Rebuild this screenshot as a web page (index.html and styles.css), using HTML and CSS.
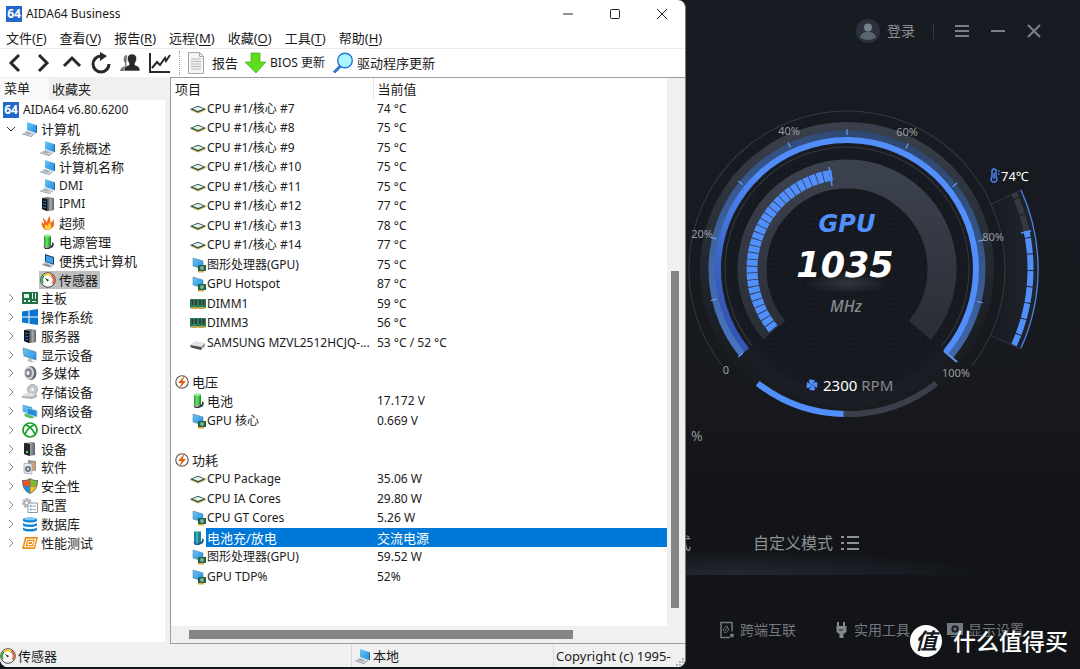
FILE: index.html
```html
<!DOCTYPE html>
<html lang="zh-CN">
<head>
<meta charset="utf-8">
<title>AIDA64 Business</title>
<link rel="stylesheet" href="styles.css">
</head>
<body>
<svg class="defs" aria-hidden="true">
  <defs>
    <linearGradient id="screen" x1="0" y1="0" x2="1" y2="1"><stop offset="0" stop-color="#6cc6f8"/><stop offset="1" stop-color="#1e8fe0"/></linearGradient>
    <linearGradient id="metal" x1="0" y1="0" x2="1" y2="0"><stop offset="0" stop-color="#3a3d42"/><stop offset=".5" stop-color="#a5a9ae"/><stop offset="1" stop-color="#5d6167"/></linearGradient>
    <linearGradient id="cell" x1="0" y1="0" x2="1" y2="0"><stop offset="0" stop-color="#1f9a2c"/><stop offset=".4" stop-color="#6fe46b"/><stop offset="1" stop-color="#118322"/></linearGradient>
    <symbol id="i-64" viewBox="0 0 16 16"><rect width="16" height="16" fill="#2268c8"/><text x="8" y="12" text-anchor="middle" class="logo-text">64</text></symbol>
    <symbol id="i-pc" viewBox="0 0 16 16"><path d="M5 1l9 3v8L5 9z" fill="url(#screen)"/><path d="M14 4l1 .5V12l-1 .3z" fill="#35608a"/><path d="M0 12.500l5-3 8 2.500-4 3z" fill="#d3d9de"/><path d="M2 12.500l3-2 5 1.700-2.500 1.500z" fill="#a9b1b8"/><path d="M0 12.500l9 2.500 4-3v.8L9 16l-9-2.700z" fill="#8b949d"/></symbol>
    <symbol id="i-laptop" viewBox="0 0 16 16"><path d="M5 1l9 3v8L5 9z" fill="#173f68"/><path d="M6 2.500l7 2.200v6L6 8.500z" fill="#3ba5ef"/><path d="M1 12l4-3 9 3-3 3z" fill="#c9ced3"/><path d="M3 12l2-1.500 6 2-1.500 1.500z" fill="#858c94"/></symbol>
    <symbol id="i-server" viewBox="0 0 16 16"><path d="M2 2l5-1 7 1v12l-7 1-5-2z" fill="#777c83"/><path d="M2 2l5 1v12l-5-2z" fill="#10151e"/><path d="M7 3l7-1v12l-7 1z" fill="url(#metal)"/><path d="M3 5l3 .6M3 8l3 .6M3 11l3 .6" stroke="#2380de"/></symbol>
    <symbol id="i-flame" viewBox="0 0 16 16"><path d="M4 14C2 12 1 9 2 7l2 2c0-3-1-4-1-6 2 1 3 3 4 5 0-3 1-5 3-7 0 3 0 5 1 7l3-4c-1 3 2 6-2 9-2 2-6 3-8 1z" fill="#f36c1d"/><path d="M5 14c-1-2 0-4 1-5l1 2 3-4c0 3 2 3 1 6-2 2-4 2-6 1z" fill="#ffd044"/></symbol>
    <symbol id="i-batt" viewBox="0 0 16 16"><path d="M4 1.500h7v12H4z" fill="url(#cell)"/><ellipse cx="7.500" cy="1.800" rx="3.500" ry="1.300" fill="#8ceb86"/><path d="M3 12c2 2 6 2 9-1V8l2 2-1 3-4 2H5z" fill="#33373b"/><path d="M4 12h6l-2 2H5z" fill="#9ba0a4"/></symbol>
    <symbol id="i-battsel" viewBox="0 0 16 16"><path d="M4 1.500h7v12H4z" fill="#17829a"/><path d="M6 2h2v11H6z" fill="#38b3b6"/><path d="M3 12c2 2 6 2 9-1V8l2 2-1 3-4 2H5z" fill="#1e568b"/></symbol>
    <symbol id="i-gauge" viewBox="0 0 16 16"><circle cx="8" cy="8" r="7.300" fill="#fff" stroke="#3b3e40"/><path d="M3 11A5.500 5.500 0 0 1 4 4" fill="none" stroke="#37ad43" stroke-width="2"/><path d="M4 4A5.500 5.500 0 0 1 11 3.300" fill="none" stroke="#f3ca32" stroke-width="2"/><path d="M11 3.300A5.500 5.500 0 0 1 12.500 11.500" fill="none" stroke="#ec6330" stroke-width="2"/><path d="M5 6l4 2-1.500 1.500z" fill="#252525"/></symbol>
    <symbol id="i-board" viewBox="0 0 16 16"><path d="M0 2h16v12H0z" fill="#1d7344"/><path d="M2 4h5v4H2zM2 10h2v2H2zM6 10h2v2H6zM10 3h1v6h-1zM13 3h1v6h-1zM10 11h4v1h-4z" fill="#e7f4ec"/></symbol>
    <symbol id="i-win" viewBox="0 0 16 16"><path d="M0 2.500l6.500-1v6H0zM7.500 1.300L16 0v7.500H7.500zM0 8.500h6.500v6L0 13.600zM7.500 8.500H16V16l-8.500-1.300z" fill="#0a76d0"/></symbol>
    <symbol id="i-monitor" viewBox="0 0 16 16"><path d="M1 1l13 4v8L2 9z" fill="url(#screen)" stroke="#607d97" stroke-width=".7"/><path d="M7 11l3 1v2l3 1-4 .5-4-2z" fill="#bac2c9"/></symbol>
    <symbol id="i-speaker" viewBox="0 0 16 16"><ellipse cx="9" cy="8" rx="5.500" ry="7" fill="#63696f"/><ellipse cx="7" cy="8" rx="5" ry="6.500" fill="#d0d4d8"/><ellipse cx="6.500" cy="8" rx="3.300" ry="4.500" fill="#777d83"/><ellipse cx="6" cy="8" rx="1.500" ry="2.200" fill="#f2f2f2"/></symbol>
    <symbol id="i-disk" viewBox="0 0 16 16"><circle cx="10.500" cy="5.500" r="5" fill="#c5cace" stroke="#8d9398" stroke-width=".7"/><circle cx="10.500" cy="5.500" r="1.500" fill="#fff"/><path d="M0 12l5-3 10 1v3l-5 2-10-1z" fill="#aeb4b9"/><path d="M0 12l5-3 10 1-5 2.500z" fill="#e2e5e7"/></symbol>
    <symbol id="i-net" viewBox="0 0 16 16"><path d="M1 2l9 2.500V11L1 8.500z" fill="url(#screen)" stroke="#4f86b0" stroke-width=".5"/><path d="M5 5l10 2.500V14L5 11z" fill="#268bdb" stroke="#9fd6f9" stroke-width=".7"/><path d="M2 10.500l3 .5 5 2 3 1.500-4 1-6-2z" fill="#54bf5c"/></symbol>
    <symbol id="i-dx" viewBox="0 0 16 16"><circle cx="8" cy="8" r="7" fill="#fff" stroke="#15a026" stroke-width="1.700"/><path d="M4 3c3 1 7 5 9 9M12 3c-3 1-7 5-9 9" fill="none" stroke="#15a026" stroke-width="1.700"/></symbol>
    <symbol id="i-device" viewBox="0 0 16 16"><path d="M2 2l8-1 3 1v12l-6 1-5-2z" fill="url(#metal)"/><path d="M2 2l6 1v12l-6-2z" fill="#222529"/><circle cx="5" cy="11" r="1.200" fill="#55d95c"/></symbol>
    <symbol id="i-soft" viewBox="0 0 16 16"><path d="M6 1l8 1v10l-8-1z" fill="#8e959b"/><path d="M9 3l4 .6v8L9 11z" fill="#d9a06a"/><path d="M2 4l8 1v10l-8-1z" fill="#e7e9eb" stroke="#90979d" stroke-width=".6"/><circle cx="6" cy="10" r="3" fill="#707981"/><circle cx="6" cy="10" r="1" fill="#fff"/></symbol>
    <symbol id="i-shield" viewBox="0 0 16 16"><path d="M8 0c3 2 5 2 8 2 0 7-2 11-8 14C2 13 0 9 0 2c3 0 5 0 8-2z" fill="#656c70"/><path d="M7.700 1v7H1.500L1 3c3 0 5-1 6.700-2z" fill="#e9552b"/><path d="M8.300 1v7h6.200L15 3c-3 0-5-1-6.700-2z" fill="#7cbb2c"/><path d="M1.700 8.500h6V15c-3-1.500-5-3.500-6-6.500z" fill="#1793dc"/><path d="M14.300 8.500h-6V15c3-1.500 5-3.500 6-6.500z" fill="#fbbc25"/></symbol>
    <symbol id="i-config" viewBox="0 0 16 16"><circle cx="5" cy="6" r="3.500" fill="none" stroke="#adb4ba" stroke-width="3" stroke-dasharray="2 1"/><circle cx="5" cy="6" r="2.500" fill="none" stroke="#aeb5bb" stroke-width="2"/><path d="M6 6h9.500v9.500H6z" fill="#fff" stroke="#8e979f"/><path d="M8 9h1.500M8 12.500h1.500" stroke="#2678cf" stroke-width="1.500"/><path d="M10.500 9H14M10.500 12.500H14" stroke="#a1a7ad"/></symbol>
    <symbol id="i-db" viewBox="0 0 16 16"><path d="M1 3c3-2 11-2 14 0v2c-3 2-11 2-14 0zM1 7c3 2 11 2 14 0v2.500c-3 2-11 2-14 0zM1 11.500c3 2 11 2 14 0V14c-3 2-11 2-14 0z" fill="#1685d9"/><ellipse cx="8" cy="3" rx="6" ry="1.300" fill="#7ac7f7"/></symbol>
    <symbol id="i-bench" viewBox="0 0 16 16"><path d="M3 2h13l-3 12H0z" fill="#f38b19"/><path d="M4.700 4.300h8.800l-1.900 7.500H2.800z" fill="none" stroke="#fff" stroke-width="1.100"/><path d="M6.500 6.500h4.500l-.8 3H5.700z" fill="none" stroke="#fff"/></symbol>
    <symbol id="i-cpu" viewBox="0 0 16 16"><path d="M0 9l8 3.500L16 9l-1-1-7 3-7-3z" fill="#d5aa54"/><path d="M0 8l8-3.300L16 8l-8 3.500z" fill="#245b43"/><path d="M2.500 7.700l5.500-2 5.500 2-5.500 2.200z" fill="#e8ecea"/></symbol>
    <symbol id="i-gpu" viewBox="0 0 16 16"><path d="M3 1l10 3v8L3 9z" fill="url(#screen)" stroke="#496e8c" stroke-width=".5"/><path d="M8 8h8v6H8z" fill="#1d6544"/><circle cx="12" cy="11" r="2" fill="#7fae97"/><path d="M8 14h6v1.500H8z" fill="#e3ad3c"/></symbol>
    <symbol id="i-ram" viewBox="0 0 16 16"><path d="M0 3h16v9H0z" fill="#26805b"/><path d="M1.500 4h2v5h-2zM5 4h2v5H5zM9 4h2v5H9zM12.500 4h2v5h-2z" fill="#38393a"/><path d="M1 11h6v2H1zM8 11h7v2H8z" fill="#c9a44b"/></symbol>
    <symbol id="i-ssd" viewBox="0 0 16 16"><path d="M0 10l5-4 10 2-4 4z" fill="#e2e3e4"/><path d="M0 10l11 2v3L1 12.500z" fill="#484b4e"/><path d="M11 12l4-4v3l-4 4z" fill="#8f9396"/></symbol>
    <symbol id="i-volt" viewBox="0 0 16 16"><circle cx="7" cy="8" r="6.200" fill="#fff" stroke="#55514e" stroke-width="1.100"/><path d="M10 1L3 9h3.500L4 15l7-8H7.500z" fill="#e0600f"/></symbol>
  </defs>
</svg>

<div class="desktop">
  <section class="window">
    <header class="titlebar">
      <svg class="ico"><use href="#i-64"/></svg>
      <h1>AIDA64 Business</h1>
      <div class="win-controls">
        <button aria-label="最小化"><svg viewBox="0 0 12 12"><path d="M1 6h10"/></svg></button>
        <button aria-label="最大化"><svg viewBox="0 0 12 12"><rect x="1.500" y="1.500" width="9" height="9" rx="1"/></svg></button>
        <button aria-label="关闭"><svg viewBox="0 0 12 12"><path d="M1 1l10 10M11 1L1 11"/></svg></button>
      </div>
    </header>
    <nav class="menubar">
      <button>文件(<u>F</u>)</button><button>查看(<u>V</u>)</button><button>报告(<u>R</u>)</button><button>远程(<u>M</u>)</button><button>收藏(<u>O</u>)</button><button>工具(<u>T</u>)</button><button>帮助(<u>H</u>)</button>
    </nav>
    <div class="toolbar">
      <button aria-label="后退"><svg viewBox="0 0 22 22"><path d="M15 3l-8 8 8 8" class="line"/></svg></button>
      <button aria-label="前进"><svg viewBox="0 0 22 22"><path d="M6 3l8 8-8 8" class="line"/></svg></button>
      <button aria-label="向上"><svg viewBox="0 0 22 22"><path d="M2 14l8-8 8 8" class="line"/></svg></button>
      <button aria-label="刷新"><svg viewBox="0 0 22 22"><path d="M10 4a8 8 0 1 0 8 8" class="line"/><path d="M9 0l7 4-7 5z" class="solid"/></svg></button>
      <button aria-label="用户"><svg viewBox="0 0 22 22"><path d="M7 3c-4 0-4 6-2 8v3c-2 1-4 1-5 5h6z" fill="#777"/><path d="M12 2c-6 0-5 7-3 9v2c-3 1-5 2-5 6h16c0-4-2-5-5-6v-2c2-2 3-9-3-9z" class="solid" stroke="#fff" stroke-width=".6"/></svg></button>
      <button aria-label="图表"><svg viewBox="0 0 22 22"><path d="M1 1v19h20" class="axis"/><path d="M3 16l5-6 3 3 5-7 1 3 4-6" class="axis"/></svg></button>
      <span class="sep"></span>
      <button class="labelled"><svg viewBox="0 0 22 22"><path d="M1.500.5h11l4 4v17h-15z" fill="#f5f5f5" stroke="#a5a5a5"/><path d="M12.500.5v4h4" fill="none" stroke="#a5a5a5"/><path d="M4 7h10M4 9.500h10M4 12h10M4 14.500h10M4 17h10" stroke="#b5b5b5"/></svg>报告</button>
      <button class="labelled latin"><svg viewBox="0 0 22 22"><path d="M6 1h9v9h6L11 21 0 10h6z" fill="#5fdc1d" stroke="#42ad16" stroke-width=".7"/></svg>BIOS 更新</button>
      <button class="labelled"><svg viewBox="0 0 22 22"><path d="M8.500 14L2 20.500" stroke="#3278cf" stroke-width="3"/><circle cx="13" cy="8.500" r="7.300" fill="#adf5ff" stroke="#2277d2" stroke-width="1.400"/></svg>驱动程序更新</button>
    </div>

    <div class="content">
      <aside class="sidebar">
        <div class="tabs"><button class="active">菜单</button><button>收藏夹</button></div>
        <ul class="tree">
          <li class="l0 latin"><svg class="ico"><use href="#i-64"/></svg><span>AIDA64 v6.80.6200</span></li>
          <li class="l1"><svg class="arrow open" viewBox="0 0 8 8"><path d="M2 0l4 4-4 4"/></svg><svg class="ico"><use href="#i-pc"/></svg><span>计算机</span></li>
          <li class="l2"><svg class="ico"><use href="#i-pc"/></svg><span>系统概述</span></li>
          <li class="l2"><svg class="ico"><use href="#i-pc"/></svg><span>计算机名称</span></li>
          <li class="l2 latin"><svg class="ico"><use href="#i-pc"/></svg><span>DMI</span></li>
          <li class="l2 latin"><svg class="ico"><use href="#i-server"/></svg><span>IPMI</span></li>
          <li class="l2"><svg class="ico"><use href="#i-flame"/></svg><span>超频</span></li>
          <li class="l2"><svg class="ico"><use href="#i-batt"/></svg><span>电源管理</span></li>
          <li class="l2"><svg class="ico"><use href="#i-laptop"/></svg><span>便携式计算机</span></li>
          <li class="l2"><div class="current"><svg class="ico"><use href="#i-gauge"/></svg><span>传感器</span></div></li>
          <li class="l1"><svg class="arrow" viewBox="0 0 8 8"><path d="M2 0l4 4-4 4"/></svg><svg class="ico"><use href="#i-board"/></svg><span>主板</span></li>
          <li class="l1"><svg class="arrow" viewBox="0 0 8 8"><path d="M2 0l4 4-4 4"/></svg><svg class="ico"><use href="#i-win"/></svg><span>操作系统</span></li>
          <li class="l1"><svg class="arrow" viewBox="0 0 8 8"><path d="M2 0l4 4-4 4"/></svg><svg class="ico"><use href="#i-server"/></svg><span>服务器</span></li>
          <li class="l1"><svg class="arrow" viewBox="0 0 8 8"><path d="M2 0l4 4-4 4"/></svg><svg class="ico"><use href="#i-monitor"/></svg><span>显示设备</span></li>
          <li class="l1"><svg class="arrow" viewBox="0 0 8 8"><path d="M2 0l4 4-4 4"/></svg><svg class="ico"><use href="#i-speaker"/></svg><span>多媒体</span></li>
          <li class="l1"><svg class="arrow" viewBox="0 0 8 8"><path d="M2 0l4 4-4 4"/></svg><svg class="ico"><use href="#i-disk"/></svg><span>存储设备</span></li>
          <li class="l1"><svg class="arrow" viewBox="0 0 8 8"><path d="M2 0l4 4-4 4"/></svg><svg class="ico"><use href="#i-net"/></svg><span>网络设备</span></li>
          <li class="l1 latin"><svg class="arrow" viewBox="0 0 8 8"><path d="M2 0l4 4-4 4"/></svg><svg class="ico"><use href="#i-dx"/></svg><span>DirectX</span></li>
          <li class="l1"><svg class="arrow" viewBox="0 0 8 8"><path d="M2 0l4 4-4 4"/></svg><svg class="ico"><use href="#i-device"/></svg><span>设备</span></li>
          <li class="l1"><svg class="arrow" viewBox="0 0 8 8"><path d="M2 0l4 4-4 4"/></svg><svg class="ico"><use href="#i-soft"/></svg><span>软件</span></li>
          <li class="l1"><svg class="arrow" viewBox="0 0 8 8"><path d="M2 0l4 4-4 4"/></svg><svg class="ico"><use href="#i-shield"/></svg><span>安全性</span></li>
          <li class="l1"><svg class="arrow" viewBox="0 0 8 8"><path d="M2 0l4 4-4 4"/></svg><svg class="ico"><use href="#i-config"/></svg><span>配置</span></li>
          <li class="l1"><svg class="arrow" viewBox="0 0 8 8"><path d="M2 0l4 4-4 4"/></svg><svg class="ico"><use href="#i-db"/></svg><span>数据库</span></li>
          <li class="l1"><svg class="arrow" viewBox="0 0 8 8"><path d="M2 0l4 4-4 4"/></svg><svg class="ico"><use href="#i-bench"/></svg><span>性能测试</span></li>
        </ul>
      </aside>

      <main class="pane">
        <div class="list">
          <table>
            <colgroup><col class="c-item"><col></colgroup>
            <thead><tr><th>项目</th><th>当前值</th></tr></thead>
            <tbody>
              <tr><td><div class="cell"><svg class="ico"><use href="#i-cpu"/></svg><span>CPU #1/核心 #7</span></div></td><td>74 °C</td></tr>
              <tr><td><div class="cell"><svg class="ico"><use href="#i-cpu"/></svg><span>CPU #1/核心 #8</span></div></td><td>75 °C</td></tr>
              <tr><td><div class="cell"><svg class="ico"><use href="#i-cpu"/></svg><span>CPU #1/核心 #9</span></div></td><td>75 °C</td></tr>
              <tr><td><div class="cell"><svg class="ico"><use href="#i-cpu"/></svg><span>CPU #1/核心 #10</span></div></td><td>75 °C</td></tr>
              <tr><td><div class="cell"><svg class="ico"><use href="#i-cpu"/></svg><span>CPU #1/核心 #11</span></div></td><td>75 °C</td></tr>
              <tr><td><div class="cell"><svg class="ico"><use href="#i-cpu"/></svg><span>CPU #1/核心 #12</span></div></td><td>77 °C</td></tr>
              <tr><td><div class="cell"><svg class="ico"><use href="#i-cpu"/></svg><span>CPU #1/核心 #13</span></div></td><td>78 °C</td></tr>
              <tr><td><div class="cell"><svg class="ico"><use href="#i-cpu"/></svg><span>CPU #1/核心 #14</span></div></td><td>77 °C</td></tr>
              <tr><td><div class="cell"><svg class="ico"><use href="#i-gpu"/></svg><span>图形处理器(GPU)</span></div></td><td>75 °C</td></tr>
              <tr><td><div class="cell"><svg class="ico"><use href="#i-gpu"/></svg><span>GPU Hotspot</span></div></td><td>87 °C</td></tr>
              <tr><td><div class="cell"><svg class="ico"><use href="#i-ram"/></svg><span>DIMM1</span></div></td><td>59 °C</td></tr>
              <tr><td><div class="cell"><svg class="ico"><use href="#i-ram"/></svg><span>DIMM3</span></div></td><td>56 °C</td></tr>
              <tr><td><div class="cell"><svg class="ico"><use href="#i-ssd"/></svg><span>SAMSUNG MZVL2512HCJQ-...</span></div></td><td>53 °C / 52 °C</td></tr>
              <tr><td></td><td></td></tr>
              <tr class="cjk"><td><div class="cell group"><svg class="ico"><use href="#i-volt"/></svg><span>电压</span></div></td><td></td></tr>
              <tr><td class="cjk"><div class="cell"><svg class="ico"><use href="#i-batt"/></svg><span>电池</span></div></td><td>17.172 V</td></tr>
              <tr><td><div class="cell"><svg class="ico"><use href="#i-gpu"/></svg><span>GPU 核心</span></div></td><td>0.669 V</td></tr>
              <tr><td></td><td></td></tr>
              <tr class="cjk"><td><div class="cell group"><svg class="ico"><use href="#i-volt"/></svg><span>功耗</span></div></td><td></td></tr>
              <tr><td><div class="cell"><svg class="ico"><use href="#i-cpu"/></svg><span>CPU Package</span></div></td><td>35.06 W</td></tr>
              <tr><td><div class="cell"><svg class="ico"><use href="#i-cpu"/></svg><span>CPU IA Cores</span></div></td><td>29.80 W</td></tr>
              <tr><td><div class="cell"><svg class="ico"><use href="#i-gpu"/></svg><span>CPU GT Cores</span></div></td><td>5.26 W</td></tr>
              <tr class="selected cjk"><td><div class="cell"><svg class="ico"><use href="#i-battsel"/></svg><span>电池充/放电</span></div></td><td>交流电源</td></tr>
              <tr><td><div class="cell"><svg class="ico"><use href="#i-gpu"/></svg><span>图形处理器(GPU)</span></div></td><td>59.52 W</td></tr>
              <tr><td><div class="cell"><svg class="ico"><use href="#i-gpu"/></svg><span>GPU TDP%</span></div></td><td>52%</td></tr>
            </tbody>
          </table>
        </div>
        <div class="vbar"><div class="thumb"></div></div>
        <div class="hbar"><div class="thumb"></div></div>
      </main>
    </div>

    <footer class="statusbar">
      <div><svg class="ico"><use href="#i-gauge"/></svg>传感器</div>
      <div><svg class="ico"><use href="#i-pc"/></svg>本地</div>
      <div>Copyright (c) 1995-<svg class="grip" viewBox="0 0 9 9"><path d="M6 0h2v2H6zM3 3h2v2H3zM6 3h2v2H6zM0 6h2v2H0zM3 6h2v2H3zM6 6h2v2H6z" fill="#b4b4b4"/></svg></div>
    </footer>
  </section>

  <section class="monitor">
    <header class="topbar">
      <button class="login"><svg viewBox="0 0 24 24"><circle cx="12" cy="12" r="12" fill="#2c323d"/><circle cx="12" cy="8.500" r="4" fill="#75818c"/><path d="M4 18c2-7 14-7 16 0-4 4-12 4-16 0z" fill="#58646e"/></svg>登录</button>
      <span class="divider"></span>
      <button aria-label="菜单"><svg viewBox="0 0 16 16"><path d="M1 3h14M1 8h14M1 13h14"/></svg></button>
      <button aria-label="最小化"><svg viewBox="0 0 16 16"><path d="M1 8h14"/></svg></button>
      <button aria-label="关闭"><svg viewBox="0 0 16 16"><path d="M2 2l12 12M14 2L2 14"/></svg></button>
    </header>

    <svg class="gauge" viewBox="0 62 394 363" role="img" aria-label="GPU 1035 MHz">
      <defs>
        <pattern id="dots" width="5" height="5" patternUnits="userSpaceOnUse"><circle cx="2.500" cy="2.500" r="1.300" fill="#12161b"/></pattern>
        <linearGradient id="band" x1="0" y1="0" x2="0" y2="1"><stop offset="0" stop-color="#39404b"/><stop offset=".55" stop-color="#20252c"/><stop offset=".85" stop-color="#181b1f"/></linearGradient>
        <linearGradient id="track" x1="0" y1="0" x2="0" y2="1"><stop offset="0" stop-color="#3b414d"/><stop offset="1" stop-color="#2a2e37"/></linearGradient>
        <linearGradient id="ring" x1="0" y1=".8" x2="1" y2="0"><stop offset="0" stop-color="#3355b4"/><stop offset=".4" stop-color="#508cfb"/><stop offset="1" stop-color="#5390fd"/></linearGradient>
        <linearGradient id="glow" x1="0" y1=".9" x2="1" y2=".3"><stop offset="0" stop-color="#2a4268"/><stop offset="1" stop-color="#4b79c7"/></linearGradient>
        <linearGradient id="fan"><stop offset="0" stop-color="#171b21"/><stop offset="1" stop-color="#262b34"/></linearGradient>
        <radialGradient id="shine"><stop offset="0" stop-color="#31363d"/><stop offset="1" stop-color="#31363d" stop-opacity="0"/></radialGradient>
      </defs>
      <g transform="translate(161 269)">
        <path d="M144-64L174-79A191 191 0 0 1 174 79L144 66A158 158 0 0 0 144-64z" fill="url(#fan)" opacity=".65"/>
        <path d="M143-64L174-79M143 66l31 14" stroke="#343840"/>
        <circle r="158" fill="none" stroke="#343941" pathLength="360" stroke-dasharray="256 360" transform="rotate(142)"/>
        <circle r="147" fill="#1a1d23"/>
        <circle r="142" fill="none" stroke="url(#band)" stroke-width="10"/>
        <circle r="135" fill="none" stroke="url(#glow)" stroke-width="7" pathLength="360" stroke-dasharray="259 360" transform="rotate(141)"/>
        <path d="M-100.300 81.200A129 129 0 1 1 98.800 82.900" fill="none" stroke="url(#ring)" stroke-width="6"/>
        <circle r="124" fill="#171b21"/>
        <circle r="122" fill="none" stroke="#343a43" pathLength="360" stroke-dasharray="258 360" transform="rotate(141)"/>
        <circle r="117" fill="url(#dots)"/>
        <path d="M-72.800 61.100A95 95 0 1 1 72.800 61.100" fill="none" stroke="url(#track)" stroke-width="29"/>
        <path d="M-73.800 59.800A95 95 0 0 1-14.900-93.800" fill="none" stroke="#518ffc" stroke-width="11" pathLength="120" stroke-dasharray="3.600 .5"/>
        <path d="M-18-102l3 19" stroke="#518ffc" stroke-width="1.500"/>
        <path d="M97 82l13 11" stroke="#6098f2" stroke-width="2"/>
        <g stroke="#74a9ff">
          <path id="tick" d="M134 0h6" transform="rotate(141)"/>
          <use href="#tick" transform="rotate(26)"/><use href="#tick" transform="rotate(52)"/><use href="#tick" transform="rotate(78)"/><use href="#tick" transform="rotate(104)"/><use href="#tick" transform="rotate(129)"/><use href="#tick" transform="rotate(155)"/><use href="#tick" transform="rotate(181)"/><use href="#tick" transform="rotate(207)"/><use href="#tick" transform="rotate(233)"/>
        </g>
        <path d="M-89.300 114.300A145 145 0 0 0 89.300 114.300" fill="none" stroke="#3a404b" stroke-width="6"/>
        <path d="M-89.300 114.300A145 145 0 0 0-3.500 145" fill="none" stroke="#518ffc" stroke-width="6"/>
        <path d="M174-79A191 191 0 0 1 174 79" fill="none" stroke="#4a83e8" stroke-width="1.300"/>
        <path d="M179.500-38.200A183.500 183.500 0 0 0 167-76.100" fill="none" stroke="#343943" stroke-width="6" pathLength="12" stroke-dasharray="4.800 .4"/>
        <path d="M167 76.100A183.500 183.500 0 0 0 179.500-38.200" fill="none" stroke="#518ffc" stroke-width="6" pathLength="36.500" stroke-dasharray="4.800 .3" stroke-dashoffset="1.300"/>
        <path d="M174-36l10-2" stroke="#518ffc" stroke-width="1.500"/>
        <ellipse cx="0" cy="14" rx="42" ry="11" fill="url(#shine)"/>
      </g>
      <g class="scale">
        <text x="103" y="135">40%</text><text x="221" y="136">60%</text><text x="16" y="238">20%</text><text x="307" y="241">80%</text><text x="40" y="374">0</text><text x="270" y="377">100%</text>
      </g>
      <text x="161" y="232" class="gpu">GPU</text>
      <text x="159" y="277" class="clock">1035</text>
      <text x="160" y="312" class="unit">MHz</text>
      <g transform="translate(126 385)" fill="#518ffc"><path id="blade" d="M0 0C-2-1-4-3-2.500-5.500L3-5C2-3 1-2 0 0z"/><use href="#blade" transform="rotate(90)"/><use href="#blade" transform="rotate(180)"/><use href="#blade" transform="rotate(270)"/></g>
      <text x="137" y="391" class="fan-speed">2300 <tspan>RPM</tspan></text>
      <g fill="none" stroke="#4c8afa" stroke-width="1.400"><path d="M306 177v-6a2 2 0 0 1 4 0v6a3 3 0 1 1-4 0zM308 173v6M312 171h1.500M312 174h1.500"/></g>
      <text x="315" y="181" class="temp">74℃</text>
    </svg>

    <div class="percent">%</div>
    <div class="modes"><span class="clipped">式</span><button>自定义模式<svg viewBox="0 0 18 16"><path d="M0 2h3M6 2h12M0 8h3M6 8h12M0 14h3M6 14h12"/></svg></button></div>
    <nav class="tools">
      <a href="#link"><svg viewBox="0 0 16 18"><path d="M11 16.500H2V1.500h11v9" fill="none" stroke="#747980" stroke-width="1.500"/><path d="M5 10c-2-2 2-6 4-4M9 7c2 2-2 6-4 4M6 10l3-4" fill="none" stroke="#747980"/><circle cx="13" cy="14.500" r="2" fill="#747980"/></svg>跨端互联</a>
      <a href="#util"><svg viewBox="0 0 16 18"><path d="M4 1h2v4h4V1h2v4h1.500v6l-3 2v4h-4v-4l-3-2V5H4z" fill="#83888f"/><path d="M6 9h4" stroke="#22252a"/></svg>实用工具</a>
      <a href="#display"><svg viewBox="0 0 16 18"><path d="M0 2h16v12H0zM4 15h8v1H4z" fill="#747980"/><circle cx="8" cy="8" r="2.500" fill="none" stroke="#1c2025" stroke-width="2"/><path d="M8 4v1.500M8 10.500V12M4 8h1.500M10.500 8H12M5 5l1 1M10 10l1 1M11 5l-1 1M6 10l-1 1" stroke="#1c2025" stroke-width="1.200"/></svg>显示设置</a>
    </nav>
  </section>
  <div class="watermark"><span class="seal">值</span><span>什么值得买</span></div>
</div>
</body>
</html>
```
FILE: styles.css
```css
* { box-sizing: border-box; }

body {
  margin: 0;
  background: #14171c;
  color: #1b1b1b;
  font: 13px/18px "Noto Sans", "Noto Sans CJK SC", sans-serif;
}

button {
  display: inline-flex;
  align-items: center;
  padding: 0;
  border: 0;
  background: none;
  color: inherit;
  font: inherit;
  white-space: nowrap;
}

.defs { position: absolute; width: 0; height: 0; }
.logo-text { font: bold 12px "Noto Sans", sans-serif; fill: #fff; }
.ico { flex: none; width: 16px; height: 16px; }
.latin { font-size: 12px; }

.desktop {
  position: relative;
  display: grid;
  grid-template-columns: 686fr 394fr;
  min-height: 100vh;
  overflow: hidden;
}

/* System information window */
.window {
  display: flex;
  flex-direction: column;
  min-width: 0;
  margin-bottom: 2px;
  border-right: 1px solid #777b80;
  border-radius: 0 8px 8px 8px;
  background: #fff;
  overflow: hidden;
}

.titlebar { display: flex; align-items: center; gap: 4px; height: 28px; padding: 0 17px 0 6px; }
.titlebar h1 { flex: 1; margin: 0; font-size: 12px; font-weight: 400; }
.win-controls { display: flex; gap: 35px; }
.win-controls svg { width: 12px; height: 12px; fill: none; stroke: #222; }

.menubar { display: flex; gap: 13px; height: 21px; padding: 0 6px; border-bottom: 1px solid #ececec; }
.menubar u { text-underline-offset: 2px; }

.toolbar { display: flex; align-items: center; gap: 7px; height: 28px; padding: 0 4px; }
.toolbar svg { width: 22px; height: 22px; }
.toolbar .line { fill: none; stroke: #292929; stroke-width: 3; }
.toolbar .axis { fill: none; stroke: #292929; stroke-width: 2; }
.toolbar .solid { fill: #292929; }
.toolbar .labelled { gap: 3px; }
.sep { height: 24px; margin-left: 1px; border-left: 1px dotted #999; }

.content {
  flex: 1;
  display: grid;
  grid-template-columns: 170fr 515fr;
  background: #f0f0f0;
}

.sidebar { display: flex; flex-direction: column; padding: 1px 5px 2px 0; }
.tabs { display: flex; height: 22px; }
.tabs button { padding: 0 4px 0 3px; }
.tabs .active { padding: 0 19px 2px 4px; background: #fafafa; }
.tree {
  flex: 1;
  display: grid;
  grid-template-rows: repeat(24, 1fr);
  margin: 0;
  padding: 1px 0 90px;
  background: #fff;
  list-style: none;
}
.tree li { display: flex; align-items: center; gap: 3px; min-height: 0; white-space: nowrap; }
.tree .l0 { gap: 4px; padding-left: 3px; }
.tree .l1 { padding-left: 7px; }
.tree .l2 { padding-left: 40px; }
.arrow { width: 8px; height: 8px; margin-right: 4px; fill: none; stroke: #888; overflow: visible; }
.arrow.open { transform: rotate(90deg); stroke: #333; }
.current { display: flex; align-items: center; gap: 3px; margin-left: -1px; padding: 0 2px 0 1px; background: #bfbfbf; }

.pane {
  display: grid;
  grid-template-columns: 1fr 18px;
  grid-template-rows: 1fr 17px;
  min-width: 0;
  border: 1px solid #9a9ea3;
  border-right: 0;
}
.list { background: #fff; }
table { width: 100%; border-collapse: collapse; table-layout: fixed; font-size: 12px; }
.c-item { width: 202px; }
th { height: 21px; padding: 0 4px; font-size: 13px; font-weight: 400; text-align: left; }
th + th { border-left: 1px solid #e5e5e5; }
td { height: 19px; padding: 0 4px; white-space: nowrap; }
tr:nth-child(even) td { height: 20px; }
td:first-child { padding-right: 0; }
.cjk { font-size: 13px; }
.cell { display: flex; align-items: center; height: 18px; padding-left: 15px; }
.cell.group { padding-left: 0; }
.cell span { flex: 1; padding-left: 1px; }
.selected { background: linear-gradient(to right, #fff 35px, #0078d7 35px); color: #fff; }

.vbar, .hbar { display: flex; background: #f0f0f0; }
.vbar { flex-direction: column; align-items: flex-start; padding: 193px 4px 18px; }
.hbar { grid-column: 1 / -1; padding: 4px 112px 4px 18px; }
.thumb { flex: 1; background: #858585; }
.vbar .thumb { width: 8px; }

.statusbar {
  display: grid;
  grid-template-columns: 351fr 202fr 132fr;
  height: 23px;
  background: #f0f0f0;
}
.statusbar div { display: flex; align-items: center; gap: 2px; white-space: nowrap; }
.statusbar div + div { padding-left: 3px; border-left: 1px solid #d8d8d8; }
.statusbar div:last-child { padding-left: 2px; }
.grip { align-self: flex-end; flex: none; width: 9px; height: 9px; margin-left: auto; }

/* Hardware control panel */
.monitor {
  display: flex;
  flex-direction: column;
  min-width: 0;
  background: linear-gradient(#171b22, #17191e 60%, #121418 75%);
  color: #8c9196;
}
.topbar { display: flex; align-items: center; justify-content: flex-end; gap: 20px; height: 62px; padding-right: 38px; font-size: 14px; }
.topbar svg { width: 16px; height: 16px; fill: none; stroke: #7c7f88; stroke-width: 2; }
.topbar .login { gap: 7px; }
.topbar .login svg { width: 24px; height: 24px; stroke: none; }
.divider { height: 16px; margin: 0 0 0 -2px; border-left: 1px solid #363a42; }

.gauge { display: block; width: 100%; }
.gauge text { font-family: "Noto Sans", "Noto Sans CJK SC", sans-serif; }
.scale text { font-size: 11px; fill: #9a9da2; text-anchor: middle; }
.gauge .gpu, .gauge .clock { font-family: "DejaVu Sans", sans-serif; font-weight: bold; font-style: italic; text-anchor: middle; }
.gauge .gpu { font-size: 24px; fill: #518ffc; }
.gauge .clock { font-size: 35px; fill: #fff; }
.gauge .unit { font-size: 16px; font-style: italic; font-weight: 500; fill: #858a91; text-anchor: middle; }
.fan-speed { font-size: 15px; fill: #fff; }
.fan-speed tspan { fill: #85888d; }
.temp { font-size: 13px; fill: #fff; }

.percent { padding: 2px 5px; font-size: 14px; }
.modes {
  display: flex;
  align-items: center;
  gap: 62px;
  height: 60px;
  margin-top: 68px;
  padding-bottom: 4px;
  background: radial-gradient(ellipse 260px 24px at 50px 60px, #232832, transparent);
  font-size: 16px;
}
.modes button { gap: 8px; }
.modes svg { width: 18px; height: 16px; stroke: #8c9196; stroke-width: 2; }
.clipped { display: flex; justify-content: flex-end; width: 5px; overflow: hidden; white-space: nowrap; }
.tools { display: flex; gap: 37px; padding: 46px 0 0 33px; }
.tools a { display: flex; align-items: center; gap: 5px; color: #74787e; font-size: 14px; text-decoration: none; white-space: nowrap; }
.tools svg { width: 16px; height: 18px; }

.watermark {
  position: absolute;
  right: 12px;
  bottom: 12px;
  display: flex;
  align-items: center;
  gap: 11px;
  color: #fff;
  font-size: 23px;
  font-weight: 500;
  line-height: 32px;
}
.seal {
  width: 32px;
  height: 32px;
  border-radius: 50%;
  background: #fff;
  color: #17191d;
  font-size: 22px;
  font-style: italic;
  font-weight: 700;
  line-height: 31px;
  text-align: center;
}
```
